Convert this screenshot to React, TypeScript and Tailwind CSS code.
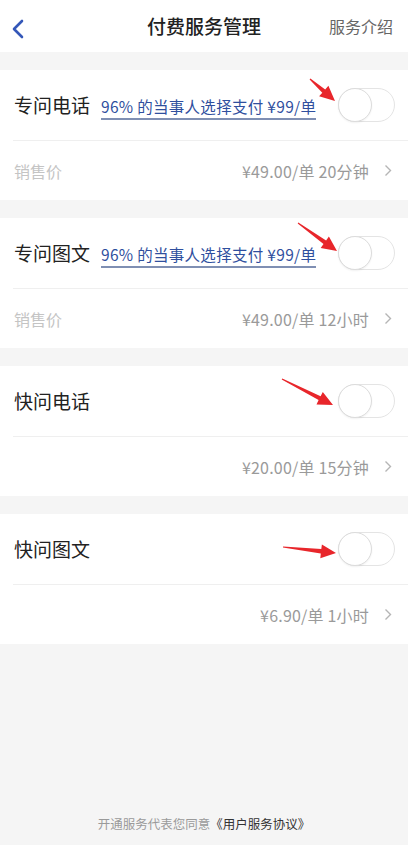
import React from "react";

const FONT = { fontFamily: '"Noto Sans CJK SC", "Noto Sans", sans-serif' };

type Service = {
  name: string;
  promo?: string;
  label?: string;
  price: string;
};

const services: Service[] = [
  { name: "专问电话", promo: "96% 的当事人选择支付 ¥99/单", label: "销售价", price: "¥49.00/单 20分钟" },
  { name: "专问图文", promo: "96% 的当事人选择支付 ¥99/单", label: "销售价", price: "¥49.00/单 12小时" },
  { name: "快问电话", price: "¥20.00/单 15分钟" },
  { name: "快问图文", price: "¥6.90/单 1小时" },
];

// red annotation arrows: [tailX, tailY, tipX, tipY]
const arrows: [number, number, number, number][] = [
  [310, 79, 335, 101],
  [298, 223, 337, 251],
  [282, 379, 333, 405],
  [283, 547, 336, 553],
];

function arrowPoints([x1, y1, x2, y2]: [number, number, number, number]) {
  const dx = x2 - x1;
  const dy = y2 - y1;
  const len = Math.hypot(dx, dy);
  const ux = dx / len;
  const uy = dy / len;
  const nx = -uy;
  const ny = ux;
  const head = 15;
  const nkX = x2 - ux * head;
  const nkY = y2 - uy * head;
  const p = (x: number, y: number) => `${x.toFixed(1)},${y.toFixed(1)}`;
  return [
    p(x1 + nx * 0.6, y1 + ny * 0.6),
    p(nkX + nx * 2.2, nkY + ny * 2.2),
    p(nkX + nx * 7, nkY + ny * 7),
    p(x2, y2),
    p(nkX - nx * 7, nkY - ny * 7),
    p(nkX - nx * 2.2, nkY - ny * 2.2),
    p(x1 - nx * 0.6, y1 - ny * 0.6),
  ].join(" ");
}

function Toggle() {
  return (
    <div className="w-[57px] h-[34px] rounded-full border border-[#e4e4e4] bg-white relative shrink-0">
      <div className="absolute left-[-1px] top-[-1px] w-[34px] h-[34px] rounded-full bg-white border border-[#dcdcdc] shadow-[0_1px_2px_rgba(0,0,0,0.06)]" />
    </div>
  );
}

function ServiceCard({ s }: { s: Service }) {
  return (
    <div className="bg-white">
      <div className="h-[70px] flex items-center pl-[14px] pr-[13px]">
        <span className="text-[19px] text-[#222]">{s.name}</span>
        {s.promo && (
          <span className="ml-[11px] text-[15.5px] text-[#2f4f9e] border-b-2 border-[#7f8fb3] leading-[20px] pb-[2px] mt-[6px] tracking-[0.3px] whitespace-nowrap">
            {s.promo}
          </span>
        )}
        <div className="ml-auto">
          <Toggle />
        </div>
      </div>
      <div className="ml-[13px] h-px bg-[#efefef]" />
      <div className="h-[59px] flex items-center pl-[14px] pr-[16px]">
        <span className="text-[16px] text-[#c4c4c4]">{s.label}</span>
        <span className="ml-auto text-[16px] text-[#9a9a9a] tracking-[0.2px]">{s.price}</span>
        <svg width="8" height="13" viewBox="0 0 8 13" className="ml-[15px]">
          <path d="M1.5 1.5 L6.5 6.5 L1.5 11.5" fill="none" stroke="#b5b5b5" strokeWidth="1.4" />
        </svg>
      </div>
    </div>
  );
}

export default function App() {
  return (
    <div className="relative w-[408px] h-[845px] bg-[#f5f5f5] flex flex-col overflow-hidden" style={FONT}>
      <div className="h-[52px] bg-white flex items-center relative shrink-0">
        <svg width="14" height="20" viewBox="0 0 14 20" className="absolute left-[11px] top-[19px]">
          <path d="M11 2 L3 10 L11 18" fill="none" stroke="#3457b8" strokeWidth="2.6" strokeLinecap="round" strokeLinejoin="round" />
        </svg>
        <div className="absolute left-0 right-0 text-center text-[19px] font-medium text-[#222]">付费服务管理</div>
        <div className="absolute right-[15px] text-[16px] text-[#666]">服务介绍</div>
      </div>
      <div className="flex flex-col gap-[18px] pt-[18px]">
        {services.map((s) => (
          <ServiceCard key={s.name} s={s} />
        ))}
      </div>
      <div className="mt-auto pb-[11px] text-center text-[12.5px]">
        <span className="text-[#9a9a9a]">开通服务代表您同意</span>
        <span className="text-[#333]">《用户服务协议》</span>
      </div>
      <svg className="absolute inset-0 pointer-events-none" width="408" height="845">
        {arrows.map((a, i) => (
          <polygon key={i} points={arrowPoints(a)} fill="#e8262b" />
        ))}
      </svg>
    </div>
  );
}
